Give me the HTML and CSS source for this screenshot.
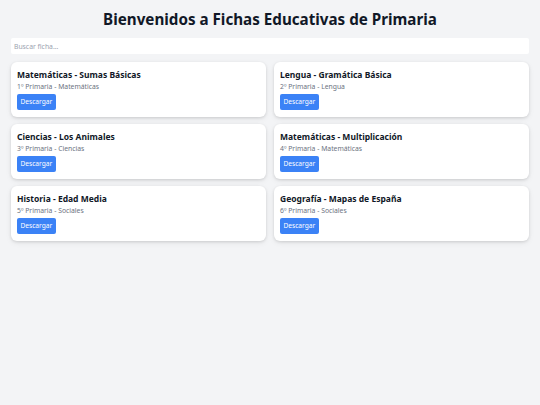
FILE: index.html
```html
<!DOCTYPE html>
<html lang="es">
<head>
<meta charset="utf-8">
<title>Fichas Educativas de Primaria</title>
<link rel="stylesheet" href="styles.css">
</head>
<body>
<main class="page">
  <h1 class="title">Bienvenidos a Fichas Educativas de Primaria</h1>
  <input class="search" type="text" placeholder="Buscar ficha...">
  <div class="grid">
    <div class="card">
      <h2 class="card-title">Matemáticas - Sumas Básicas</h2>
      <p class="card-meta">1º Primaria - Matemáticas</p>
      <button class="btn">Descargar</button>
    </div>
    <div class="card">
      <h2 class="card-title">Lengua - Gramática Básica</h2>
      <p class="card-meta">2º Primaria - Lengua</p>
      <button class="btn">Descargar</button>
    </div>
    <div class="card">
      <h2 class="card-title">Ciencias - Los Animales</h2>
      <p class="card-meta">3º Primaria - Ciencias</p>
      <button class="btn">Descargar</button>
    </div>
    <div class="card">
      <h2 class="card-title">Matemáticas - Multiplicación</h2>
      <p class="card-meta">4º Primaria - Matemáticas</p>
      <button class="btn">Descargar</button>
    </div>
    <div class="card">
      <h2 class="card-title">Historia - Edad Media</h2>
      <p class="card-meta">5º Primaria - Sociales</p>
      <button class="btn">Descargar</button>
    </div>
    <div class="card">
      <h2 class="card-title">Geografía - Mapas de España</h2>
      <p class="card-meta">6º Primaria - Sociales</p>
      <button class="btn">Descargar</button>
    </div>
  </div>
</main>
</body>
</html>
```

FILE: styles.css
```css
* { box-sizing: border-box; }
html, body {
  margin: 0;
  padding: 0;
  background: #f3f4f6;
  font-family: "Noto Sans", "Open Sans", sans-serif;
  color: #111827;
}
.page {
  padding: 8px 11px;
}
.title {
  margin: 0;
  text-align: center;
  font-size: 15.2px;
  font-weight: 700;
  line-height: 22px;
}
.search {
  display: block;
  width: 100%;
  height: 16px;
  margin: 8px 0 8px 0;
  padding: 0 3px;
  border: none;
  border-radius: 2px;
  background: #ffffff;
  font-family: inherit;
  font-size: 6.8px;
  color: #374151;
  outline: none;
}
.search::placeholder { color: #9ca3af; }
.grid {
  display: grid;
  grid-template-columns: 1fr 1fr;
  gap: 7px 8px;
}
.card {
  background: #ffffff;
  border-radius: 6px;
  padding: 6px 6px 7px;
  box-shadow: 0 1px 3px rgba(0,0,0,0.12), 0 2px 6px rgba(0,0,0,0.06);
}
.card-title {
  margin: 0;
  font-size: 8.5px;
  font-weight: 700;
  line-height: 13px;
  color: #111827;
}
.card-meta {
  margin: 0 0 2px;
  font-size: 6.8px;
  line-height: 11px;
  color: #6b7280;
}
.btn {
  display: block;
  height: 16px;
  padding: 0 3.5px;
  border: none;
  border-radius: 2px;
  background: #3b82f6;
  color: #ffffff;
  font-family: inherit;
  font-size: 6.6px;
  line-height: 16px;
}
```
